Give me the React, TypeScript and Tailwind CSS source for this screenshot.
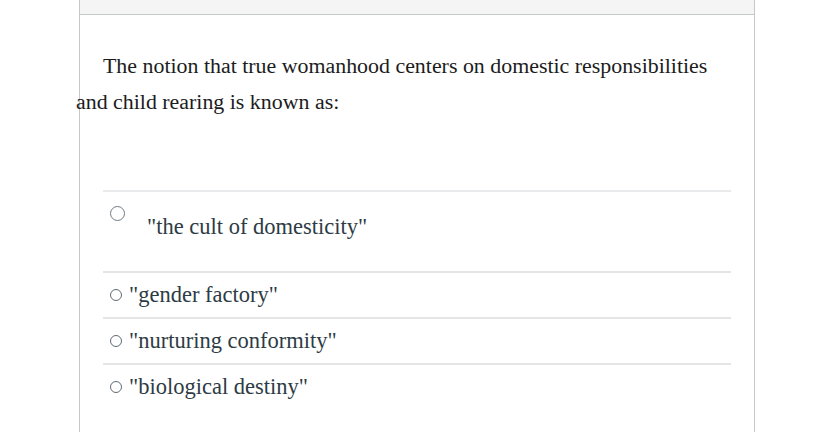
import React from 'react';

const options = ['"gender factory"', '"nurturing conformity"', '"biological destiny"'];

function Radio({ size }: { size: 'lg' | 'sm' }) {
  return (
    <span
      className={
        size === 'lg'
          ? 'block w-[15px] h-[15px] rounded-full border border-[#6f7c85] bg-white shrink-0'
          : 'block w-[12px] h-[12px] rounded-full border border-[#5f6b73] bg-white shrink-0'
      }
    />
  );
}

export default function App() {
  return (
    <div className="w-[827px] h-[432px] overflow-hidden bg-white font-['Liberation_Serif',serif]">
      <div className="ml-[79px] w-[676px] h-full border-x border-[#c4c9cc]">
        {/* Header strip */}
        <div className="h-[15px] bg-[#f5f5f5] border-b border-[#c4c9cc]" />

        {/* Question */}
        <p className="-ml-[4px] pt-[33px] indent-[27px] text-[21.9px] leading-[36px] text-[#1c1c1c] whitespace-nowrap">
          The notion that true womanhood centers on domestic responsibilities
          <br />
          and child rearing is known as:
        </p>

        {/* Answers */}
        <div className="mt-[70px] mx-[23px]">
          <div className="h-[81px] border-t-2 border-[#e8eaec] flex items-start">
            <div className="pl-[7px] pt-[14px]">
              <Radio size="lg" />
            </div>
            <div className="pl-[22px] pt-[23px] text-[22.5px] leading-[24px] text-[#2d3b45]">
              "the cult of domesticity"
            </div>
          </div>
          {options.map((o) => (
            <div key={o} className="h-[46px] border-t-2 border-[#e3e5e7] flex items-center gap-[7px] pl-[7px]">
              <Radio size="sm" />
              <span className="text-[22.5px] leading-[24px] text-[#2d3b45]">{o}</span>
            </div>
          ))}
        </div>
      </div>
    </div>
  );
}
